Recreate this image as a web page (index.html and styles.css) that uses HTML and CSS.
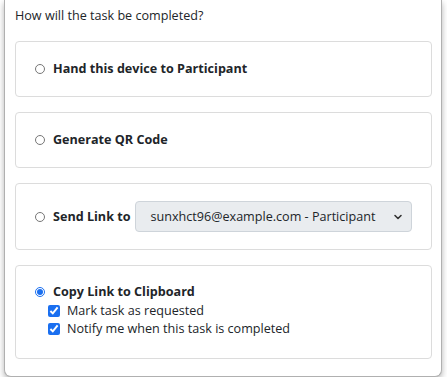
FILE: index.html
```html
<!DOCTYPE html>
<html lang="en">
<head>
  <meta charset="UTF-8" />
  <title>Task completion</title>
  <link rel="stylesheet" href="styles.css">
</head>
<body>
  <div class="card">
    <p class="question">How will the task be completed?</p>

    <div class="option">
      <label class="choice">
        <input type="radio" name="method" />
        <span>Hand this device to Participant</span>
      </label>
    </div>

    <div class="option">
      <label class="choice">
        <input type="radio" name="method" />
        <span>Generate QR Code</span>
      </label>
    </div>

    <div class="option">
      <div class="choice">
        <input type="radio" name="method" id="sendLink" />
        <label for="sendLink">Send Link to</label>
        <div class="select-wrap">
          <select class="recipient">
            <option>sunxhct96@example.com - Participant</option>
          </select>
          <svg class="chevron" width="10" height="10" viewBox="0 0 10 10">
            <path d="M2 3.5 L5 6.5 L8 3.5" fill="none" stroke="#333" stroke-width="1.6" stroke-linecap="round" stroke-linejoin="round"/>
          </svg>
        </div>
      </div>
    </div>

    <div class="option option-open">
      <label class="choice">
        <input type="radio" name="method" checked />
        <span>Copy Link to Clipboard</span>
      </label>
      <label class="sub">
        <input type="checkbox" checked />
        <span>Mark task as requested</span>
      </label>
      <label class="sub">
        <input type="checkbox" checked />
        <span>Notify me when this task is completed</span>
      </label>
    </div>
  </div>
</body>
</html>
```

FILE: styles.css
```css
body {
  margin: 0;
  background: #fff;
  font-family: 'Open Sans', sans-serif;
  font-size: 12.6px;
  color: #212529;
}

.card {
  width: 438px;
  box-sizing: border-box;
  margin: 0 0 0 4px;
  padding: 6px 9px 17px 10px;
  border: 1px solid #b0b0b0;
  border-top: none;
  border-radius: 0 0 7px 7px;
  background: #fff;
  box-shadow: 0 3px 6px rgba(0,0,0,0.3);
}

.question {
  margin: 0 0 15px 0;
  line-height: 20px;
}

.option {
  border: 1px solid #dcdcdc;
  border-radius: 4px;
  padding: 17px 19px 17px 19px;
  margin-bottom: 15px;
}

.option:last-child {
  margin-bottom: 0;
}

.option-open {
  padding: 16px 19px 20px 19px;
}

.choice {
  display: flex;
  align-items: center;
  font-weight: bold;
  height: 20px;
  line-height: 20px;
}

.option:nth-child(4) .choice {
  height: 31px;
}

.choice input[type="radio"] {
  width: 10px;
  height: 10px;
  margin: 0 8px 0 0;
  accent-color: #1a6ff0;
}

.choice label {
  margin-right: 5px;
}

.sub {
  display: flex;
  align-items: center;
  height: 18px;
  line-height: 18px;
  margin-left: 13px;
}

.sub input[type="checkbox"] {
  width: 12px;
  height: 12px;
  margin: 0 7px 0 0;
  accent-color: #1a6ff0;
}

.select-wrap {
  position: relative;
  flex: 1;
  height: 31px;
}

.recipient {
  appearance: none;
  width: 100%;
  height: 31px;
  padding: 0 24px 0 14px;
  font-family: 'Open Sans', sans-serif;
  font-size: 12.6px;
  color: #212529;
  background: #e9ecef;
  border: 1px solid #ced4da;
  border-radius: 4px;
}

.chevron {
  position: absolute;
  right: 9px;
  top: 11px;
  pointer-events: none;
}
```
